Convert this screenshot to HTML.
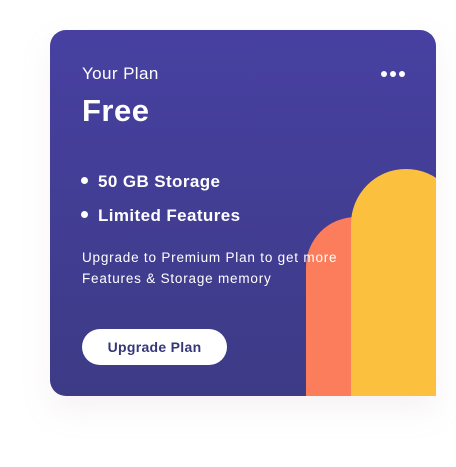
<!DOCTYPE html>
<html><head><style>
body{margin:0;width:456px;height:467px;background:#fff;font-family:"Liberation Sans",sans-serif;position:relative;overflow:hidden}
.card{position:absolute;left:50px;top:30px;width:386px;height:366px;border-radius:16px 16px 0 16px;background:linear-gradient(180deg,#4740a1 0%,#3d3b86 100%);overflow:hidden;box-shadow:0 14px 30px rgba(200,170,180,0.15);color:#fff}
.t{position:absolute;left:32px;white-space:nowrap;z-index:2}
.o{position:absolute;left:256px;top:187px;width:100px;height:200px;background:#fb7d5b;border-radius:50px 0 0 0}
.y{position:absolute;left:301px;top:139px;width:110px;height:240px;background:#fbc13e;border-radius:55px 55px 0 0}
.dot{position:absolute;width:6px;height:6px;border-radius:50%;background:#fff}
.b{display:inline-block;width:7px;height:7px;border-radius:50%;background:#fff;margin-right:9px;vertical-align:middle;position:relative;top:-2px;left:-1px}
.btn{position:absolute;left:32px;top:299px;width:145px;height:36px;border-radius:18px;background:#fff;color:#373778;font-weight:bold;font-size:14px;letter-spacing:0.3px;text-align:center;line-height:36px}
</style></head><body>
<div class="card">
<div class="o"></div><div class="y"></div>
<div class="t" style="top:34px;font-size:17px;letter-spacing:0.4px">Your Plan</div>
<div class="t" style="top:63px;font-size:31px;font-weight:bold;letter-spacing:0.5px">Free</div>
<div class="dot" style="left:331px;top:41px"></div><div class="dot" style="left:340px;top:41px"></div><div class="dot" style="left:349px;top:41px"></div>
<div class="t" style="top:142px;font-size:17px;font-weight:bold;letter-spacing:0.4px"><span class="b"></span>50 GB Storage</div>
<div class="t" style="top:176px;font-size:17px;font-weight:bold;letter-spacing:0.4px"><span class="b"></span>Limited Features</div>
<div class="t" style="top:217px;font-size:13.5px;line-height:21px;letter-spacing:0.8px">Upgrade to Premium Plan to get more<br>Features &amp; Storage memory</div>
<div class="btn">Upgrade Plan</div>
</div>
</body></html>
